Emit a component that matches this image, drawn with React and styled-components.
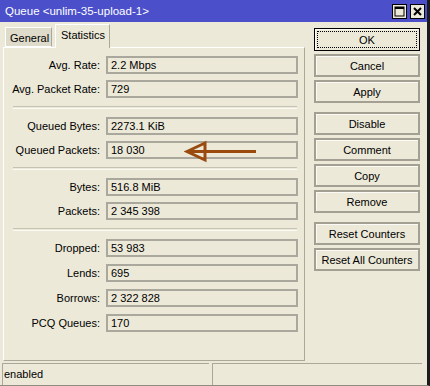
import React from 'react';
import styled, { createGlobalStyle } from 'styled-components';

const Global = createGlobalStyle`
  html, body { margin: 0; padding: 0; background: #ece9d8; }
  body { font-family: Tahoma, "Liberation Sans", Arial, sans-serif; font-size: 11px; color: #000; }
`;

const Win = styled.div`
  width: 427px;
  height: 385px;
  background: #ece9d8;
  border-right: 3px solid #1c1c1c;
  border-bottom: 1px solid #8e8c80;
  display: flex;
  flex-direction: column;
  box-sizing: content-box;
  overflow: hidden;
`;

const TitleBar = styled.div`
  height: 22px;
  background: #4b4fc9;
  color: #fff;
  display: flex;
  align-items: center;
  padding: 0 2px 0 5px;
  font-size: 11.5px;
  .title { flex: 1; }
`;

const CapBtn = styled.div`
  width: 15px;
  height: 15px;
  box-sizing: border-box;
  border: 1px solid #000;
  background: #ece9d8;
  margin-left: 3px;
  display: flex;
  align-items: center;
  justify-content: center;
`;

const Body = styled.div`
  flex: 1;
  display: flex;
  padding: 2px 0 0 3px;
`;

const Left = styled.div`
  width: 302px;
  display: flex;
  flex-direction: column;
`;

const Tabs = styled.div`
  display: flex;
  align-items: flex-end;
  height: 23px;
  padding-left: 2px;
  position: relative;
  z-index: 1;
`;

const Tab = styled.div`
  box-sizing: border-box;
  height: ${p => (p.$active ? '24px' : '20px')};
  width: ${p => p.$w}px;
  margin-right: ${p => (p.$active ? 0 : 3)}px;
  margin-bottom: ${p => (p.$active ? '-1px' : '0')};
  padding-top: ${p => (p.$active ? '4px' : '4px')};
  padding-left: ${p => (p.$active ? 5 : 4)}px;
  background: ${p => (p.$active ? '#ece9d8' : '#dedbca')};
  border: 1px solid #fff;
  border-right: 1px solid #aca899;
  border-bottom: ${p => (p.$active ? 'none' : '1px solid #fff')};
`;

const Panel = styled.div`
  box-sizing: border-box;
  height: 314px;
  border-top: 1px solid #fff;
  border-left: 1px solid #fff;
  border-right: 1px solid #aca899;
  border-bottom: 1px solid #aca899;
  padding: 8px 7px 0 0;
  display: flex;
  flex-direction: column;
`;

const Group = styled.div`
  display: grid;
  grid-template-columns: 96px 192px;
  column-gap: 6px;
  row-gap: ${p => p.$gap || 6}px;
`;

const Label = styled.div`
  text-align: right;
  line-height: 18px;
  white-space: nowrap;
`;

const Field = styled.div`
  position: relative;
  box-sizing: border-box;
  height: 18px;
  border: 2px solid #aaa89c;
  padding-left: 3px;
  line-height: 14px;
  white-space: nowrap;
`;

const Sep = styled.div`
  margin: 8px 0 8px 9px;
  height: 1px;
  border-top: 1px solid #c6c3b3;
  border-bottom: 1px solid #fafaf4;
`;

const Arrow = styled.svg`
  position: absolute;
  left: 76px;
  top: -3px;
  pointer-events: none;
`;

const Right = styled.div`
  margin-left: 9px;
  padding-top: 4px;
  width: 106px;
  display: flex;
  flex-direction: column;
`;

const BtnGroup = styled.div`
  display: flex;
  flex-direction: column;
  gap: 3px;
  margin-bottom: 9px;
`;

const Btn = styled.div`
  position: relative;
  box-sizing: border-box;
  height: 23px;
  border: 2px solid ${p => (p.$def ? '#000' : '#a3a093')};
  box-shadow: inset 1px 1px 0 #fbfaf4;
  display: flex;
  align-items: center;
  justify-content: center;
  white-space: nowrap;
  ${p => p.$def && `
    border-width: 1px;
    &::after {
      content: '';
      position: absolute;
      inset: 2px;
      border: 1px dotted #000;
    }
  `}
`;

const Status = styled.div`
  display: flex;
  height: 22px;
  padding: 1px 5px 0 2px;
  gap: 3px;
`;

const StatusCell = styled.div`
  box-sizing: border-box;
  width: ${p => p.$w}px;
  border-top: 1px solid #aca899;
  border-left: 1px solid #aca899;
  padding: 4px 0 0 1px;
`;

const rows1 = [['Avg. Rate:', '2.2 Mbps'], ['Avg. Packet Rate:', '729']];
const rows2 = [['Queued Bytes:', '2273.1 KiB'], ['Queued Packets:', '18 030']];
const rows3 = [['Bytes:', '516.8 MiB'], ['Packets:', '2 345 398']];
const rows4 = [['Dropped:', '53 983'], ['Lends:', '695'], ['Borrows:', '2 322 828'], ['PCQ Queues:', '170']];

const Rows = ({ rows, gap, arrowAt }) => (
  <Group $gap={gap}>
    {rows.map(([l, v]) => (
      <React.Fragment key={l}>
        <Label>{l}</Label>
        <Field>
          {v}
          {arrowAt === l && (
            <Arrow width="74" height="24" viewBox="0 0 74 24">
              <path d="M3 11.5 L21 3 L21 20 Z" fill="none" stroke="#9b4a0e" strokeWidth="3" strokeLinejoin="miter" />
              <path d="M5 11.5 H72" stroke="#9b4a0e" strokeWidth="3" />
            </Arrow>
          )}
        </Field>
      </React.Fragment>
    ))}
  </Group>
);

export default function App() {
  return (
    <>
      <Global />
      <Win>
        <TitleBar>
          <span className="title">Queue &lt;unlim-35-upload-1&gt;</span>
          <CapBtn>
            <svg width="11" height="11" viewBox="0 0 11 11">
              <rect x="1" y="1" width="9" height="9" fill="none" stroke="#000" strokeWidth="1" />
              <rect x="1" y="1" width="9" height="2" fill="#000" />
            </svg>
          </CapBtn>
          <CapBtn>
            <svg width="11" height="11" viewBox="0 0 11 11">
              <path d="M2 2 L9 9 M9 2 L2 9" stroke="#000" strokeWidth="2" />
            </svg>
          </CapBtn>
        </TitleBar>
        <Body>
          <Left>
            <Tabs>
              <Tab $w={47}>General</Tab>
              <Tab $w={55} $active>Statistics</Tab>
            </Tabs>
            <Panel>
              <Rows rows={rows1} />
              <Sep />
              <Rows rows={rows2} arrowAt="Queued Packets:" />
              <Sep />
              <Rows rows={rows3} />
              <Sep />
              <Rows rows={rows4} gap={7} />
            </Panel>
          </Left>
          <Right>
            <BtnGroup>
              <Btn $def>OK</Btn>
              <Btn>Cancel</Btn>
              <Btn>Apply</Btn>
            </BtnGroup>
            <BtnGroup>
              <Btn>Disable</Btn>
              <Btn>Comment</Btn>
              <Btn>Copy</Btn>
              <Btn>Remove</Btn>
            </BtnGroup>
            <BtnGroup>
              <Btn>Reset Counters</Btn>
              <Btn>Reset All Counters</Btn>
            </BtnGroup>
          </Right>
        </Body>
        <Status>
          <StatusCell $w={207}>enabled</StatusCell>
          <StatusCell $w={210} />
        </Status>
      </Win>
    </>
  );
}
